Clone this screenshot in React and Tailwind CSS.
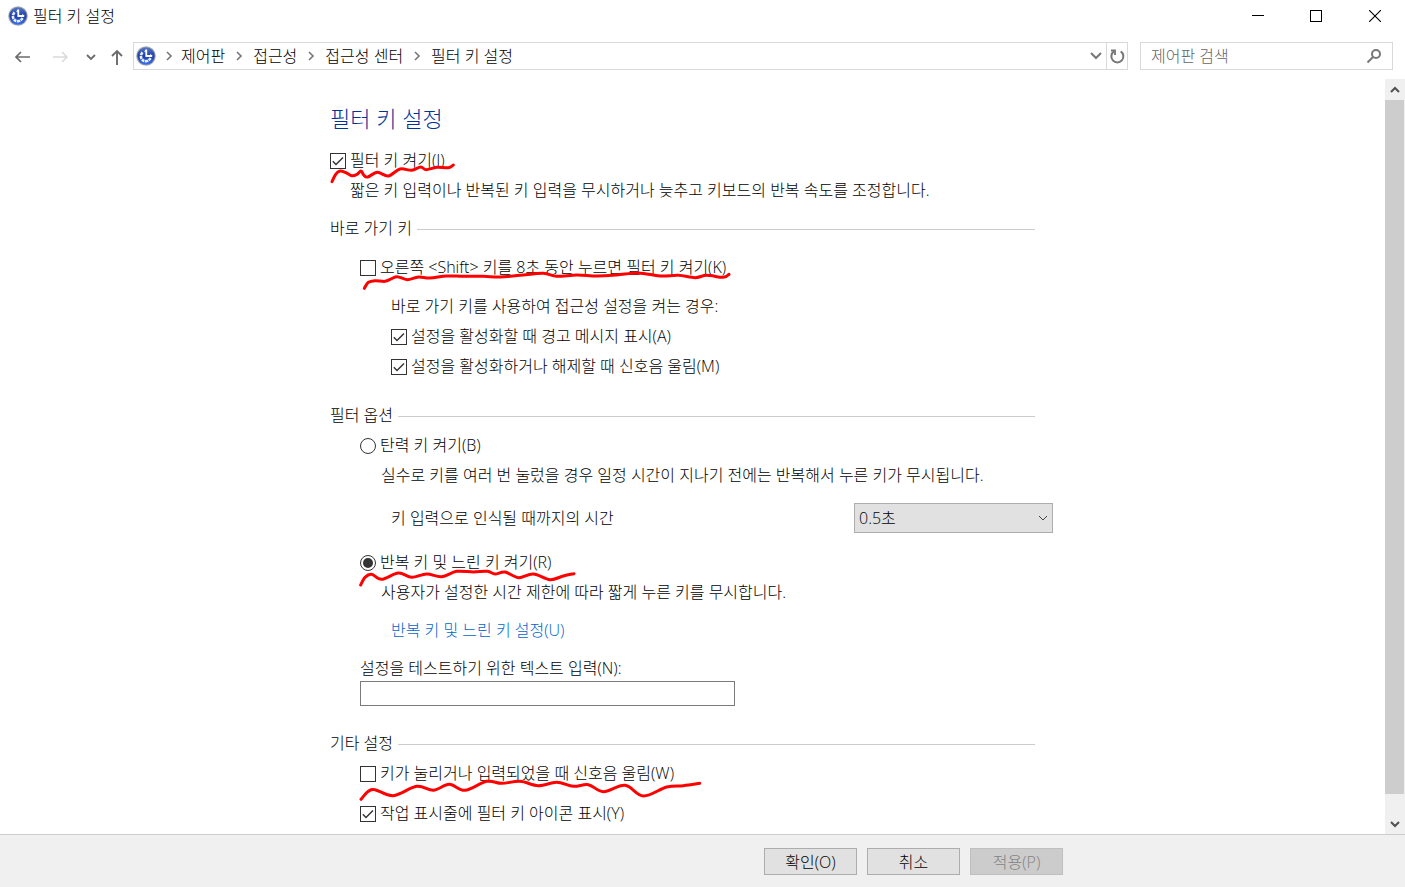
import React from "react";

function smooth(points) {
  let d = `M${points[0][0]} ${points[0][1]}`;
  for (let i = 0; i < points.length - 1; i++) {
    const p0 = points[i - 1] || points[i];
    const p1 = points[i];
    const p2 = points[i + 1];
    const p3 = points[i + 2] || p2;
    d += ` C${p1[0] + (p2[0] - p0[0]) / 6} ${p1[1] + (p2[1] - p0[1]) / 6} ${p2[0] - (p3[0] - p1[0]) / 6} ${p2[1] - (p3[1] - p1[1]) / 6} ${p2[0]} ${p2[1]}`;
  }
  return d;
}

function Scribble({ points, viewBox, className }) {
  return (
    <svg viewBox={viewBox} className={`pointer-events-none absolute max-w-none ${className}`} aria-hidden="true">
      <path d={smooth(points)} fill="none" stroke="#fe0000" strokeWidth="9" strokeLinecap="round" strokeLinejoin="round" />
    </svg>
  );
}

const markOn = [[36, 260], [47, 238], [60, 228], [76, 232], [95, 242], [111, 238], [123, 228], [131, 240], [143, 246], [172, 232], [205, 243], [240, 222], [275, 226], [302, 216], [318, 224], [350, 217], [385, 218], [400, 210]];
const markShift = [[43, 130], [55, 112], [75, 107], [105, 109], [125, 101], [142, 95], [172, 104], [205, 96], [240, 99], [290, 93], [340, 94], [400, 94], [450, 96], [510, 91], [580, 85], [620, 94], [680, 90], [740, 93], [800, 90], [865, 84], [930, 93], [985, 91], [1035, 98], [1070, 91], [1120, 97], [1137, 88]];
const markRepeat = [[32, 120], [45, 97], [65, 88], [95, 103], [145, 84], [185, 97], [230, 87], [275, 95], [320, 79], [370, 81], [412, 79], [435, 87], [465, 81], [505, 98], [550, 87], [600, 104], [640, 93], [672, 86]];
const markBeep = [[123, 448], [145, 424], [165, 419], [220, 437], [290, 409], [340, 421], [388, 403], [435, 421], [500, 394], [545, 400], [600, 394], [655, 407], [710, 397], [760, 409], [805, 404], [850, 425], [915, 406], [970, 438], [1040, 411], [1090, 407], [1139, 400]];

function AccessIcon() {
  return (
    <svg viewBox="0 0 20 20" className="h-5 w-5 shrink-0" aria-hidden="true">
      <defs>
        <linearGradient id="orb" x1="0" y1="0" x2="0" y2="1">
          <stop offset="0" stopColor="#5577c4" />
          <stop offset="0.5" stopColor="#1d3fa6" />
          <stop offset="1" stopColor="#3d70ea" />
        </linearGradient>
      </defs>
      <circle cx="10" cy="10" r="9.8" fill="#a9a9ad" />
      <circle cx="10" cy="10" r="8.7" fill="url(#orb)" />
      <path d="M6.6 6.6A4.9 4.9 0 1 0 14.4 12" fill="none" stroke="#e8eefc" strokeWidth="2.6" strokeDasharray="3 .6" />
      <path d="M10.300 3.600v7.200M9.500 10h6.700" fill="none" stroke="#fff" strokeWidth="1.800" />
      <path d="M8 5.500l2.300-2.300v2.800zM16.600 10l-2.400-2.200v2.200z" fill="#fff" />
    </svg>
  );
}

function Chevron({ className }) {
  return (
    <svg viewBox="0 0 10 10" className={`h-[10px] w-[10px] shrink-0 ${className}`} fill="none" stroke="currentColor" aria-hidden="true">
      <path d="M1 3l4 4 4-4" />
    </svg>
  );
}

function Check({ id, label, checked, children }) {
  return (
    <div className="relative flex h-6 items-center">
      <span className="mt-[2px] grid h-4 w-4 shrink-0">
        <input id={id} type="checkbox" defaultChecked={checked} className="peer col-start-1 row-start-1 h-4 w-4 appearance-none border border-[#333] bg-white" />
        <svg viewBox="0 0 16 16" className="pointer-events-none col-start-1 row-start-1 hidden h-4 w-4 peer-checked:block" fill="none" stroke="#333" strokeWidth="1.4" aria-hidden="true">
          <path d="M2.8 8.3l3.2 3.3 7-7.2" />
        </svg>
      </span>
      <label htmlFor={id} className="ml-1 whitespace-nowrap">{label}</label>
      {children}
    </div>
  );
}

function Radio({ id, label, checked, children }) {
  return (
    <div className="relative flex h-6 items-center">
      <span className="mt-[2px] grid h-4 w-4 shrink-0">
        <input id={id} name="filter-mode" type="radio" defaultChecked={checked} className="peer col-start-1 row-start-1 h-4 w-4 appearance-none rounded-full border border-[#333] bg-white" />
        <span className="pointer-events-none col-start-1 row-start-1 hidden h-[10px] w-[10px] place-self-center rounded-full bg-[#333] peer-checked:block" />
      </span>
      <label htmlFor={id} className="ml-1 whitespace-nowrap">{label}</label>
      {children}
    </div>
  );
}

function SectionTitle({ children, className }) {
  return (
    <h2 className={`mr-[18px] flex h-6 items-center gap-[5px] ${className}`}>
      <span className="whitespace-nowrap">{children}</span>
      <span className="mt-[2px] h-px flex-1 bg-[#ccc]" />
    </h2>
  );
}

function Crumb({ children }) {
  return (
    <li className="group flex items-center">
      <span className="grid w-7 place-items-center text-[#777] group-first:w-[25px]">
        <Chevron className="-rotate-90 stroke-[1.6]" />
      </span>
      <a href="#" className="whitespace-nowrap">{children}</a>
    </li>
  );
}

export default function App() {
  return (
    <div className="flex h-screen flex-col bg-white font-['Open_Sans','Noto_Sans_CJK_KR',sans-serif] text-[16px] leading-6 font-light text-black">
      <header className="flex h-8 shrink-0 items-center pl-2">
        <AccessIcon />
        <span className="ml-[5px] flex-1">필터 키 설정</span>
        <button aria-label="최소화" className="grid h-8 w-[58px] place-items-center">
          <svg viewBox="0 0 12 12" className="h-3 w-3" stroke="#000" shapeRendering="crispEdges"><path d="M0 5.5h12" /></svg>
        </button>
        <button aria-label="최대화" className="grid h-8 w-[58px] place-items-center">
          <svg viewBox="0 0 12 12" className="h-3 w-3" fill="none" stroke="#000" shapeRendering="crispEdges"><path d="M.5 .5h11v11h-11z" /></svg>
        </button>
        <button aria-label="닫기" className="grid h-8 w-[60px] place-items-center">
          <svg viewBox="0 0 12 12" className="h-3 w-3" stroke="#000" strokeWidth="1.1"><path d="M0 0l12 12M12 0L0 12" /></svg>
        </button>
      </header>

      <nav className="flex shrink-0 items-center pt-[10px] pr-3 pb-[9px]">
        <div className="flex w-[133px] shrink-0 items-center pt-[2px] pl-[14px] text-[#6b6b6b]">
          <button aria-label="뒤로" className="w-4">
            <svg viewBox="0 0 16 14" className="h-[14px] w-4" fill="none" stroke="currentColor" strokeWidth="1.7"><path d="M16 7H2M7 2L2 7l5 5" /></svg>
          </button>
          <button aria-label="앞으로" className="ml-[23px] w-4 text-[#d9d9d9]">
            <svg viewBox="0 0 16 14" className="h-[14px] w-4" fill="none" stroke="currentColor" strokeWidth="1.5"><path d="M0 7h14M9 2l5 5-5 5" /></svg>
          </button>
          <button aria-label="최근 위치" className="ml-[17px]">
            <Chevron className="stroke-[1.8]" />
          </button>
          <button aria-label="위로" className="ml-[14px]">
            <svg viewBox="0 0 14 16" className="h-4 w-[14px]" fill="none" stroke="currentColor" strokeWidth="1.9"><path d="M7 16V2M2 7l5-5 5 5" /></svg>
          </button>
        </div>
        <div className="flex h-7 flex-1 items-center border border-[#d9d9d9] pl-[2px]">
          <AccessIcon />
          <ol className="flex flex-1 items-center">
            <Crumb>제어판</Crumb>
            <Crumb>접근성</Crumb>
            <Crumb>접근성 센터</Crumb>
            <Crumb>필터 키 설정</Crumb>
          </ol>
          <button aria-label="이전 위치" className="grid h-full w-5 place-items-center text-[#777]">
            <svg viewBox="0 0 12 8" className="h-2 w-3" fill="none" stroke="currentColor" strokeWidth="2"><path d="M1 1l5 5 5-5" /></svg>
          </button>
          <button aria-label="새로 고침" className="grid h-full w-[21px] place-items-center border-l border-[#d9d9d9] text-[#777]">
            <svg viewBox="0 0 16 16" className="h-4 w-4" fill="none" stroke="currentColor" strokeWidth="2"><path d="M11.7 3.400A6 6 0 1 1 5 3.400" /><path d="M2 2.500h4v4.500" strokeWidth="1.8" /></svg>
          </button>
        </div>
        <div className="ml-3 flex h-7 w-[253px] items-center border border-[#d9d9d9] pr-[10px] pl-[10px]">
          <input type="search" aria-label="제어판 검색" placeholder="제어판 검색" className="min-w-0 flex-1 outline-none placeholder:text-[#666] placeholder:opacity-100" />
          <button aria-label="검색">
            <svg viewBox="0 0 16 16" className="h-4 w-4" fill="none" stroke="#777" strokeWidth="2"><circle cx="10" cy="6" r="4" /><path d="M7 9l-5.500 5.500" /></svg>
          </button>
        </div>
      </nav>

      <div className="flex min-h-0 flex-1">
        <main className="min-w-0 flex-1 overflow-hidden">
          <div className="mx-auto max-w-[745px] pt-6 pr-3 pl-[10px]">
            <h1 className="text-[22px] leading-[30px] text-[#003399]">필터 키 설정</h1>
            <div className="mt-[15px]">
              <Check id="filter-on" label="필터 키 켜기(I)" checked>
                <Scribble points={markOn} viewBox="24 195 390 75" className="top-3 -left-[2px] h-[25px] w-[130px]" />
              </Check>
            </div>
            <p className="mt-[6px] pl-5">짧은 키 입력이나 반복된 키 입력을 무시하거나 늦추고 키보드의 반복 속도를 조정합니다.</p>

            <SectionTitle className="mt-[14px]">바로 가기 키</SectionTitle>
            <div className="mt-[15px] pl-[30px]">
              <Check id="shift" label="오른쪽 <Shift> 키를 8초 동안 누르면 필터 키 켜기(K)">
                <Scribble points={markShift} viewBox="30 75 1125 63" className="top-[15px] left-0 h-[21px] w-[375px]" />
              </Check>
              <div className="mt-[15px] flex flex-col gap-[6px] pl-[31px]">
                <p>바로 가기 키를 사용하여 접근성 설정을 켜는 경우:</p>
                <Check id="warn" label="설정을 활성화할 때 경고 메시지 표시(A)" checked />
                <Check id="sound" label="설정을 활성화하거나 해제할 때 신호음 울림(M)" checked />
              </div>
            </div>

            <SectionTitle className="mt-[25px]">필터 옵션</SectionTitle>
            <div className="mt-[6px] pl-[30px]">
              <Radio id="bounce" label="탄력 키 켜기(B)" />
              <p className="mt-[6px] pl-[21px]">실수로 키를 여러 번 눌렀을 경우 일정 시간이 지나기 전에는 반복해서 누른 키가 무시됩니다.</p>
              <div className="mt-4 flex items-center justify-between pl-[31px]">
                <label htmlFor="delay">키 입력으로 인식될 때까지의 시간</label>
                <span className="grid w-[199px]">
                  <select id="delay" className="col-start-1 row-start-1 h-[30px] w-full appearance-none border border-[#adadad] bg-[#e1e1e1] pl-1">
                    <option>0.5초</option>
                  </select>
                  <Chevron className="pointer-events-none col-start-1 row-start-1 mr-[5px] place-self-center justify-self-end text-[#444]" />
                </span>
              </div>
              <div className="mt-[17px]">
                <Radio id="repeat" label="반복 키 및 느린 키 켜기(R)" checked>
                  <Scribble points={markRepeat} viewBox="21 69 666 60" className="top-[18px] -left-[3px] h-5 w-[222px]" />
                </Radio>
              </div>
              <p className="mt-[6px] pl-[21px]">사용자가 설정한 시간 제한에 따라 짧게 누른 키를 무시합니다.</p>
              <p className="mt-[14px] pl-[31px]">
                <a href="#" className="text-[#0066cc]">반복 키 및 느린 키 설정(U)</a>
              </p>
              <label htmlFor="test" className="mt-[14px] block">설정을 테스트하기 위한 텍스트 입력(N):</label>
              <input id="test" type="text" className="mt-px block h-[25px] w-[375px] border border-[#7a7a7a] px-1" />
            </div>

            <SectionTitle className="mt-[25px]">기타 설정</SectionTitle>
            <div className="mt-[6px] flex flex-col gap-4 pl-[30px]">
              <Check id="beep" label="키가 눌리거나 입력되었을 때 신호음 울림(W)">
                <Scribble points={markBeep} viewBox="111 384 1041 75" className="top-[17px] -left-[3px] h-[25px] w-[347px]" />
              </Check>
              <Check id="tray" label="작업 표시줄에 필터 키 아이콘 표시(Y)" checked />
            </div>
          </div>
        </main>
        <div className="flex w-5 shrink-0 flex-col bg-[#f0f0f0] text-[#505050]">
          <button aria-label="위로 스크롤" className="grid h-[21px] place-items-center">
            <Chevron className="rotate-180 stroke-2" />
          </button>
          <div className="mr-px flex-1 bg-[#cdcdcd]" />
          <button aria-label="아래로 스크롤" className="mt-[19px] grid h-[21px] place-items-center">
            <Chevron className="stroke-2" />
          </button>
        </div>
      </div>

      <footer className="shrink-0 border-t border-[#ccc] bg-[#f0f0f0] pt-[13px] pr-5 pb-3">
        <div className="mx-auto flex max-w-[745px] justify-end gap-[10px] pr-[2px]">
          <button className="h-[27px] w-[93px] border border-[#adadad] bg-[#e1e1e1]">확인(O)</button>
          <button className="h-[27px] w-[93px] border border-[#adadad] bg-[#e1e1e1]">취소</button>
          <button disabled className="h-[27px] w-[93px] border border-[#bfbfbf] bg-[#ccc] text-[#838383]">적용(P)</button>
        </div>
      </footer>
    </div>
  );
}
